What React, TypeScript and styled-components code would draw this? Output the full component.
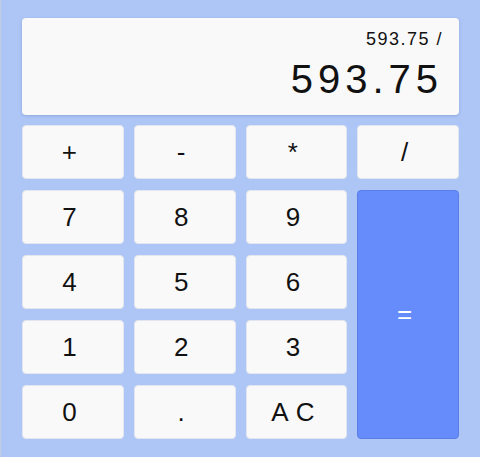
import React from "react";
import styled, { createGlobalStyle } from "styled-components";

const Global = createGlobalStyle`
  html, body { margin: 0; padding: 0; }
  body { font-family: "Liberation Sans", Arial, sans-serif; background: #adc6f6; }
`;

const Calculator = styled.div`
  box-sizing: border-box;
  width: 480px;
  height: 457px;
  padding: 18px 21px;
  background: #adc6f6;
  border-left: 1px solid #c3cde2;
  display: flex;
  flex-direction: column;
  gap: 10px;
`;

const Display = styled.div`
  box-sizing: border-box;
  height: 97px;
  background: #f9f9f9;
  border-radius: 4px;
  box-shadow: 0 1px 3px rgba(60, 80, 130, 0.25);
  padding: 10px 16px 0 10px;
  display: flex;
  flex-direction: column;
  align-items: flex-end;
  color: #111;
`;

const Expression = styled.div`
  font-size: 18px;
  letter-spacing: 1.5px;
  line-height: 22px;
`;

const Result = styled.div`
  font-size: 40px;
  letter-spacing: 5px;
  line-height: 46px;
  margin-top: 6px;
`;

const Keypad = styled.div`
  display: grid;
  grid-template-columns: repeat(4, 1fr);
  grid-auto-rows: 54px;
  column-gap: 10px;
  row-gap: 11px;
`;

const Key = styled.button<{ $accent?: boolean; $tall?: boolean }>`
  box-sizing: border-box;
  margin: 0;
  padding: 0;
  font-family: "Liberation Sans", Arial, sans-serif;
  font-size: 26px;
  letter-spacing: 7px;
  border-radius: 4px;
  cursor: pointer;
  background: ${(p) => (p.$accent ? "#668cfc" : "#f9f9f9")};
  color: ${(p) => (p.$accent ? "#ffffff" : "#111")};
  border: 1px solid ${(p) => (p.$accent ? "#5a7ee6" : "#e3e6ee")};
  grid-row: ${(p) => (p.$tall ? "span 4" : "auto")};
  display: flex;
  align-items: center;
  justify-content: center;
`;

export default function App() {
  const row1 = ["+", "-", "*", "/"];
  return (
    <>
      <Global />
      <Calculator>
        <Display>
          <Expression>593.75 /</Expression>
          <Result>593.75</Result>
        </Display>
        <Keypad>
          {row1.map((k) => (
            <Key key={k}>{k}</Key>
          ))}
          <Key>7</Key>
          <Key>8</Key>
          <Key>9</Key>
          <Key $accent $tall>=</Key>
          <Key>4</Key>
          <Key>5</Key>
          <Key>6</Key>
          <Key>1</Key>
          <Key>2</Key>
          <Key>3</Key>
          <Key>0</Key>
          <Key>.</Key>
          <Key>AC</Key>
        </Keypad>
      </Calculator>
    </>
  );
}
